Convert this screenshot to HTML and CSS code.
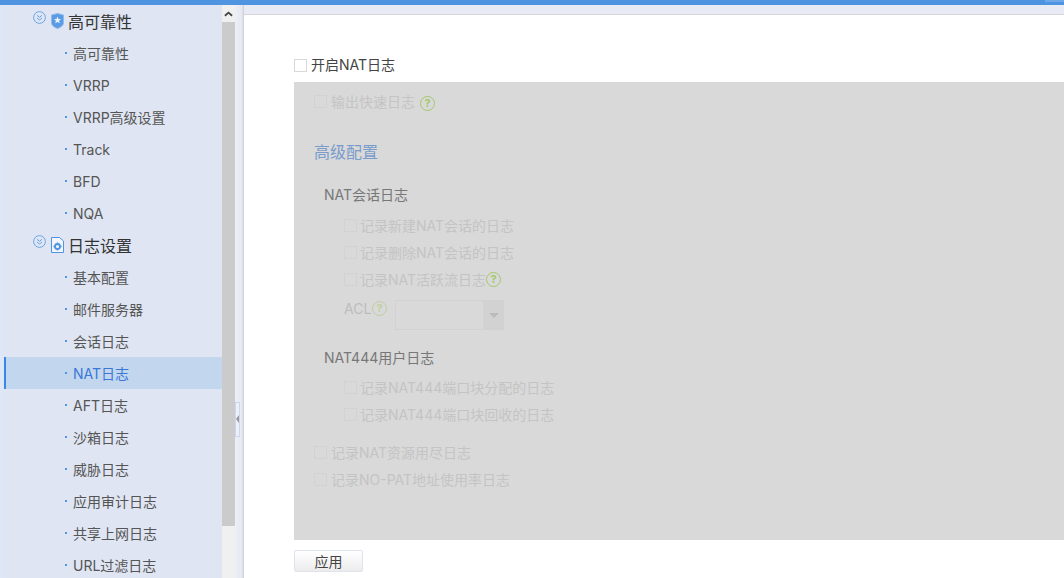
FILE: index.html
```html
<!DOCTYPE html>
<html lang="zh-CN">
<head>
<meta charset="UTF-8">
<meta name="viewport" content="width=device-width, initial-scale=1.0">
<title>NAT日志</title>
<link rel="stylesheet" href="styles.css">
</head>
<body>

<div class="topbar"><div class="topbar-end"></div></div>

<div class="shell">
  <nav class="sidebar">
    <div class="group">
      <svg class="toggle" viewBox="0 0 13 13"><circle cx="6.5" cy="6.5" r="5.9"/><path d="M4 4.3l2.5 2 2.5-2M4 7l2.5 2 2.5-2"/></svg>
      <svg class="group-icon" viewBox="0 0 13 16"><path class="solid" d="M6.5 0.5L12.5 2v7.5c0 3-3 5-6 6-3-1-6-3-6-6V2z"/><path class="star" d="M6.5 3.5l1 2.4 2.6.2-2 1.7.7 2.5-2.3-1.4-2.3 1.4.7-2.5-2-1.7 2.6-.2z"/></svg>
      <span>高可靠性</span>
    </div>
    <a class="item">高可靠性</a>
    <a class="item">VRRP</a>
    <a class="item">VRRP高级设置</a>
    <a class="item">Track</a>
    <a class="item">BFD</a>
    <a class="item">NQA</a>
    <div class="group">
      <svg class="toggle" viewBox="0 0 13 13"><circle cx="6.5" cy="6.5" r="5.9"/><path d="M4 4.3l2.5 2 2.5-2M4 7l2.5 2 2.5-2"/></svg>
      <svg class="group-icon" viewBox="0 0 13 16"><path class="outline" d="M0.5 0.5H8.5L12.5 4V15.5H0.5z"/><circle class="gear" cx="6.5" cy="9.5" r="2.5"/><path class="gear-teeth" d="M6.5 5.4v1.6M6.5 12v1.6M2.4 9.5H4M9 9.5h1.6"/></svg>
      <span>日志设置</span>
    </div>
    <a class="item">基本配置</a>
    <a class="item">邮件服务器</a>
    <a class="item">会话日志</a>
    <a class="item active">NAT日志</a>
    <a class="item">AFT日志</a>
    <a class="item">沙箱日志</a>
    <a class="item">威胁日志</a>
    <a class="item">应用审计日志</a>
    <a class="item">共享上网日志</a>
    <a class="item">URL过滤日志</a>
  </nav>

  <div class="scrollbar">
    <div class="scroll-up"><svg viewBox="0 0 10 6"><path d="M1 5l4-3.5L9 5"/></svg></div>
    <div class="scroll-thumb"></div>
  </div>

  <div class="gutter"><div class="collapse"></div></div>

  <main class="content">
    <label class="check enable"><i class="box"></i><span>开启NAT日志</span></label>

    <section class="panel">
      <div class="check fast"><i class="box"></i><span>输出快速日志</span><b class="help help-gap">?</b></div>

      <h2 class="panel-title">高级配置</h2>

      <h3 class="sub-title">NAT会话日志</h3>
      <div class="check nested"><i class="box"></i><span>记录新建NAT会话的日志</span></div>
      <div class="check nested"><i class="box"></i><span>记录删除NAT会话的日志</span></div>
      <div class="check nested"><i class="box"></i><span>记录NAT活跃流日志</span><b class="help">?</b></div>
      <div class="acl">
        <span class="acl-label">ACL</span><b class="help help-faint">?</b>
        <div class="select"><div class="select-value"></div><div class="select-arrow"></div></div>
      </div>

      <h3 class="sub-title user-log">NAT444用户日志</h3>
      <div class="check nested"><i class="box"></i><span>记录NAT444端口块分配的日志</span></div>
      <div class="check nested"><i class="box"></i><span>记录NAT444端口块回收的日志</span></div>

      <div class="check outer first"><i class="box"></i><span>记录NAT资源用尽日志</span></div>
      <div class="check outer"><i class="box"></i><span>记录NO-PAT地址使用率日志</span></div>
    </section>

    <button class="apply">应用</button>
  </main>
</div>

</body>
</html>
```

FILE: styles.css
```css
* {
  box-sizing: border-box;
}
html, body {
  height: 100%;
}
body {
  margin: 0;
  overflow: hidden;
  display: flex;
  flex-direction: column;
  font-family: Inter, "Noto Sans CJK SC", sans-serif;
  font-size: 14px;
  color: #555;
  background: #e9ebf4;
}

.topbar {
  height: 5px;
  flex: none;
  background: #4f94e0;
  display: flex;
  justify-content: flex-end;
}
.topbar-end {
  width: 19px;
  height: 2px;
  background: #6ea8e8;
}

.shell {
  flex: 1;
  min-height: 0;
  display: flex;
}

/* left menu */
.sidebar {
  width: 222px;
  flex: none;
  padding: 0 0 0 4px;
  overflow: hidden;
  background: linear-gradient(to right, #dde8f9 0, #dfe5f2 6px);
}
.group {
  height: 32px;
  display: flex;
  align-items: center;
  padding-left: 29px;
  font-size: 16px;
  color: #333;
}
.toggle {
  width: 13px;
  height: 13px;
  margin-top: -7px;
  fill: none;
  stroke: #6aa5e6;
  stroke-width: 1;
}
.group-icon {
  width: 13px;
  height: 16px;
  margin: -1px 4px 0 5px;
}
.solid {
  fill: #5b9be3;
  stroke: #8db9ec;
}
.star {
  fill: #e8f0fb;
}
.outline {
  fill: #f2f6fc;
  stroke: #4f94e0;
}
.gear {
  fill: none;
  stroke: #4f94e0;
  stroke-width: 1.8;
}
.gear-teeth {
  stroke: #4f94e0;
  stroke-width: 1.4;
}
.item {
  position: relative;
  display: block;
  height: 32px;
  line-height: 34px;
  padding-left: 69px;
  color: #555;
}
.item::before {
  content: "";
  position: absolute;
  left: 61px;
  top: 15px;
  width: 2px;
  height: 2px;
  background: #4f94e0;
}
.item.active {
  color: #3a78d8;
  background: #c2d6ee;
  box-shadow: inset 2px 0 #3b87e4;
}

/* scrollbar */
.scrollbar {
  width: 13px;
  flex: none;
  background: #f0f0f0;
}
.scroll-up {
  height: 17px;
  display: flex;
  align-items: center;
  justify-content: center;
}
.scroll-up svg {
  width: 9px;
  height: 6px;
  fill: none;
  stroke: #444;
  stroke-width: 2;
}
.scroll-thumb {
  height: 504px;
  background: #cbcbcb;
}

.gutter {
  width: 9px;
  flex: none;
  position: relative;
  background: linear-gradient(to right, #edeff6, #e6e8f1 7px, #c9cbd2);
}
.collapse {
  position: absolute;
  left: 0;
  top: 397px;
  width: 5px;
  height: 35px;
  border: 1px solid #ccd6ee;
  background: #eef0f7;
}
.collapse::after {
  content: "";
  position: absolute;
  left: 0;
  top: 12px;
  border: 4px solid transparent;
  border-left: 0;
  border-right: 3px solid #999;
}

/* page */
.content {
  flex: 1;
  min-width: 0;
  margin-top: 9px;
  padding: 43px 0 0 50px;
  background: #fff;
  border-top: 1px solid #d4d6dc;
}
.check {
  display: flex;
  align-items: center;
  height: 27px;
}
.box {
  width: 13px;
  height: 13px;
  margin-right: 4px;
  border: 1px solid #d8d8d8;
  background: #fff;
}
.check span {
  margin-top: -2px;
}
.enable {
  height: 14px;
  color: #444;
  margin-bottom: 10px;
}

.panel {
  height: 458px;
  padding: 6px 0 0 20px;
  background: #d9d9d9;
  color: #c4c4c4;
}
.panel .box {
  border-color: #d2d2d2;
  background: #d9d9d9;
}
.help {
  width: 15px;
  height: 15px;
  border: 1.5px solid #a5c768;
  border-radius: 50%;
  color: #a5c768;
  font-size: 11px;
  line-height: 12px;
  text-align: center;
}
.help-gap {
  margin: 4px 0 0 5px;
}
.help-faint {
  opacity: .5;
  margin: 1px 0 0 1px;
}
.panel-title {
  margin: 26px 0 0;
  font-size: 16px;
  font-weight: normal;
  line-height: 22px;
  color: #7a9ccb;
}
.sub-title {
  margin: 21px 0 6px 10px;
  font-size: 14px;
  font-weight: normal;
  line-height: 22px;
  color: #777;
}
.user-log {
  margin-top: 17px;
  margin-bottom: 5px;
}
.nested {
  margin-left: 30px;
}
.nested .box {
  margin-right: 3px;
}
.outer.first {
  margin-top: 11px;
}
.acl {
  display: flex;
  margin: 7px 0 0 30px;
  height: 30px;
}
.acl-label {
  width: 27px;
  color: #bdbdbd;
}
.acl .help {
  flex: none;
}
.select {
  display: flex;
  width: 109px;
  height: 30px;
  margin-left: 8px;
}
.select-value {
  flex: 1;
  border: 1px solid #d2d2d2;
}
.select-arrow {
  width: 20px;
  position: relative;
  background: #d2d2d2;
}
.select-arrow::after {
  content: "";
  position: absolute;
  left: 5px;
  top: 13px;
  border: 5px solid transparent;
  border-top-color: #bbb;
  border-bottom: 0;
}

.apply {
  display: block;
  width: 69px;
  height: 22px;
  margin-top: 10px;
  padding: 0;
  border: 1px solid #dfe3ee;
  border-radius: 2px;
  background: linear-gradient(#fff, #ececec);
  font: inherit;
  color: #444;
}
```
